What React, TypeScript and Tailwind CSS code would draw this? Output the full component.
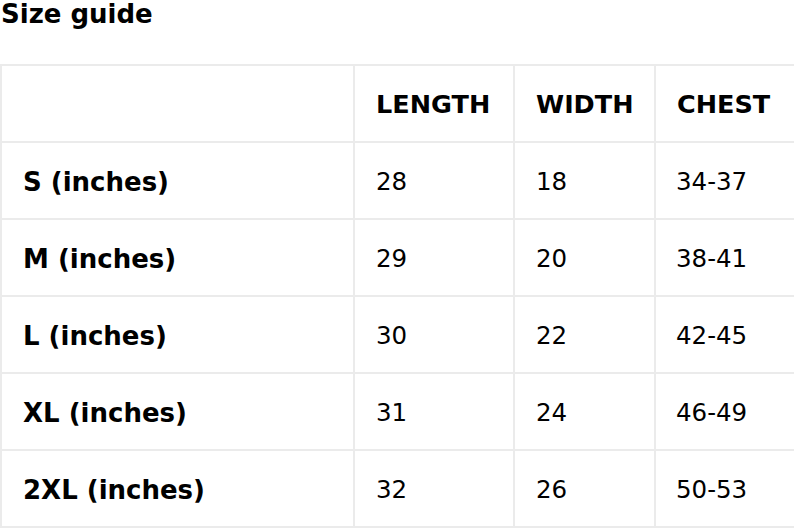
const rows = [
  { size: "S (inches)", length: "28", width: "18", chest: "34-37" },
  { size: "M (inches)", length: "29", width: "20", chest: "38-41" },
  { size: "L (inches)", length: "30", width: "22", chest: "42-45" },
  { size: "XL (inches)", length: "31", width: "24", chest: "46-49" },
  { size: "2XL (inches)", length: "32", width: "26", chest: "50-53" },
];

export default function App() {
  return (
    <div className="min-h-screen bg-white text-black font-['DejaVu_Sans',sans-serif]">
      <h2 className="pl-[1px] text-[26px] leading-[28px] font-bold">Size guide</h2>

      <table className="mt-[36px] w-[794px] table-fixed border-collapse">
        <colgroup>
          <col className="w-[353px]" />
          <col className="w-[160px]" />
          <col className="w-[141px]" />
          <col className="w-[140px]" />
        </colgroup>
        <thead>
          <tr className="h-[77px]">
            <th className="border-2 border-[#ebebeb]" />
            <th className="border-2 border-[#ebebeb] pl-[21px] pt-[2px] text-left text-[25.5px] font-bold">LENGTH</th>
            <th className="border-2 border-[#ebebeb] pl-[21px] pt-[2px] text-left text-[25.5px] font-bold">WIDTH</th>
            <th className="border-2 border-[#ebebeb] pl-[21px] pt-[2px] text-left text-[25.5px] font-bold">CHEST</th>
          </tr>
        </thead>
        <tbody>
          {rows.map((r) => (
            <tr key={r.size} className="h-[77px]">
              <td className="border-2 border-[#ebebeb] pl-[21px] pt-[3px] text-[26px] font-bold">{r.size}</td>
              <td className="border-2 border-[#ebebeb] pl-[21px] pt-[3px] text-[24.5px]">{r.length}</td>
              <td className="border-2 border-[#ebebeb] pl-[21px] pt-[3px] text-[24.5px]">{r.width}</td>
              <td className="border-2 border-[#ebebeb] pl-[20px] pt-[3px] text-[24.5px]">{r.chest}</td>
            </tr>
          ))}
        </tbody>
      </table>
    </div>
  );
}
